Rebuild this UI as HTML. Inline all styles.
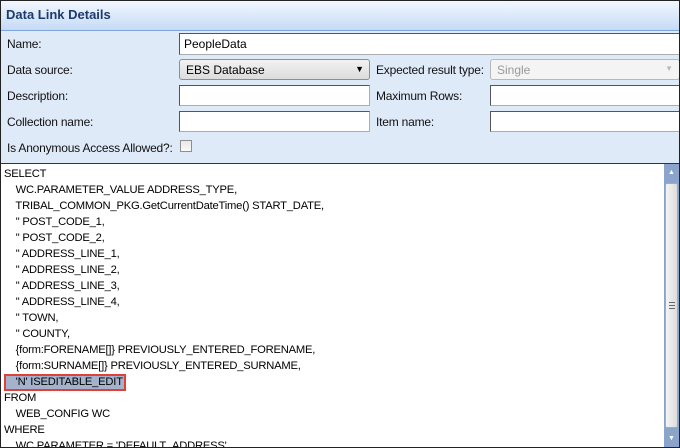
<!DOCTYPE html>
<html><head><style>
*{margin:0;padding:0;box-sizing:border-box}
body{width:680px;height:448px;overflow:hidden;background:#fff;font-family:"Liberation Sans",sans-serif;font-size:12px;color:#000}
.frame{position:absolute;left:0;top:0;width:680px;height:448px;border:1px solid #222;background:#dfeaf9;overflow:hidden}
.title{position:absolute;left:0;top:0;width:678px;height:30px;background:linear-gradient(#f2f7fe,#c6dbf6);border-bottom:1px solid #7ea6d8;font-weight:bold;color:#1d3b6e;font-size:13px;padding:6px 0 0 5px}
.lbl{position:absolute;font-size:12px;color:#111;letter-spacing:-0.2px}
.in{position:absolute;background:#fff;border:1px solid #abadb3;border-top-color:#555;border-left-color:#555;padding:3px 0 0 4px}
.sel{position:absolute;border:1px solid #8e8f8f;border-radius:3px;background:linear-gradient(#f2f2f2,#dcdcdc);padding:3px 0 0 6px}
.code{position:absolute;left:0;top:162px;width:678px;height:286px;background:#fff;border-top:1px solid #333}
.ln{position:absolute;left:3px;white-space:pre;font-size:11.2px;letter-spacing:-0.2px;line-height:16px}
.sb{position:absolute;left:663px;top:163px;width:15px;height:284px;background:#8aa4cc}
</style></head><body>
<div class="frame">
<div class="title">Data Link Details</div>
<div class="lbl" style="left:6px;top:36px">Name:</div>
<div class="in" style="left:178px;top:32px;width:500px;height:22px;border-right:none">PeopleData</div>
<div class="lbl" style="left:6px;top:62px">Data source:</div>
<div class="sel" style="left:178px;top:58px;width:191px;height:21px">EBS Database<span style="position:absolute;right:5px;top:4px;font-size:9px">▼</span></div>
<div class="lbl" style="left:375px;top:62px">Expected result type:</div>
<div class="sel" style="left:489px;top:58px;width:190px;height:21px;background:#f4f4f4;border-color:#b8b8b8;color:#999">Single<span style="position:absolute;right:6px;top:4px;font-size:8px;color:#bbb">▼</span></div>
<div class="lbl" style="left:6px;top:88px">Description:</div>
<div class="in" style="left:178px;top:84px;width:191px;height:21px"></div>
<div class="lbl" style="left:375px;top:88px">Maximum Rows:</div>
<div class="in" style="left:489px;top:84px;width:190px;height:21px"></div>
<div class="lbl" style="left:6px;top:114px">Collection name:</div>
<div class="in" style="left:178px;top:110px;width:191px;height:21px"></div>
<div class="lbl" style="left:375px;top:114px">Item name:</div>
<div class="in" style="left:489px;top:110px;width:190px;height:21px"></div>
<div class="lbl" style="left:6px;top:140px">Is Anonymous Access Allowed?:</div>
<div style="position:absolute;left:179px;top:139px;width:12px;height:12px;border:1px solid #8f8f8f;background:linear-gradient(#e8e8e8,#fafafa)"></div>
<div class="code">
<div style="position:absolute;left:3px;top:210px;width:122px;height:17px;background:#a4b2cb;border:2px solid #e0403a"></div>
<div class="ln" style="top:2px">SELECT
    WC.PARAMETER_VALUE ADDRESS_TYPE,
    TRIBAL_COMMON_PKG.GetCurrentDateTime() START_DATE,
    '' POST_CODE_1,
    '' POST_CODE_2,
    '' ADDRESS_LINE_1,
    '' ADDRESS_LINE_2,
    '' ADDRESS_LINE_3,
    '' ADDRESS_LINE_4,
    '' TOWN,
    '' COUNTY,
    {form:FORENAME[]} PREVIOUSLY_ENTERED_FORENAME,
    {form:SURNAME[]} PREVIOUSLY_ENTERED_SURNAME,
    'N' ISEDITABLE_EDIT
FROM
    WEB_CONFIG WC
WHERE
    WC.PARAMETER = 'DEFAULT_ADDRESS'</div>
</div>
<div class="sb">
<div style="position:absolute;left:0;top:0;width:15px;height:17px;color:#fff;font-size:7px;text-align:center;line-height:17px">▲</div>
<div style="position:absolute;left:1px;top:19px;width:13px;height:245px;background:linear-gradient(90deg,#f4f4f4,#dcdcdc);border:1px solid #aaa;border-radius:2px"><div style="position:absolute;left:3px;top:118px;width:6px;height:7px;border-top:1px solid #666;border-bottom:1px solid #666"><div style="margin-top:2px;border-top:1px solid #666"></div></div></div>
<div style="position:absolute;left:0;top:266px;width:15px;height:17px;color:#fff;font-size:7px;text-align:center;line-height:17px">▼</div>
</div>
</div>
</body></html>
